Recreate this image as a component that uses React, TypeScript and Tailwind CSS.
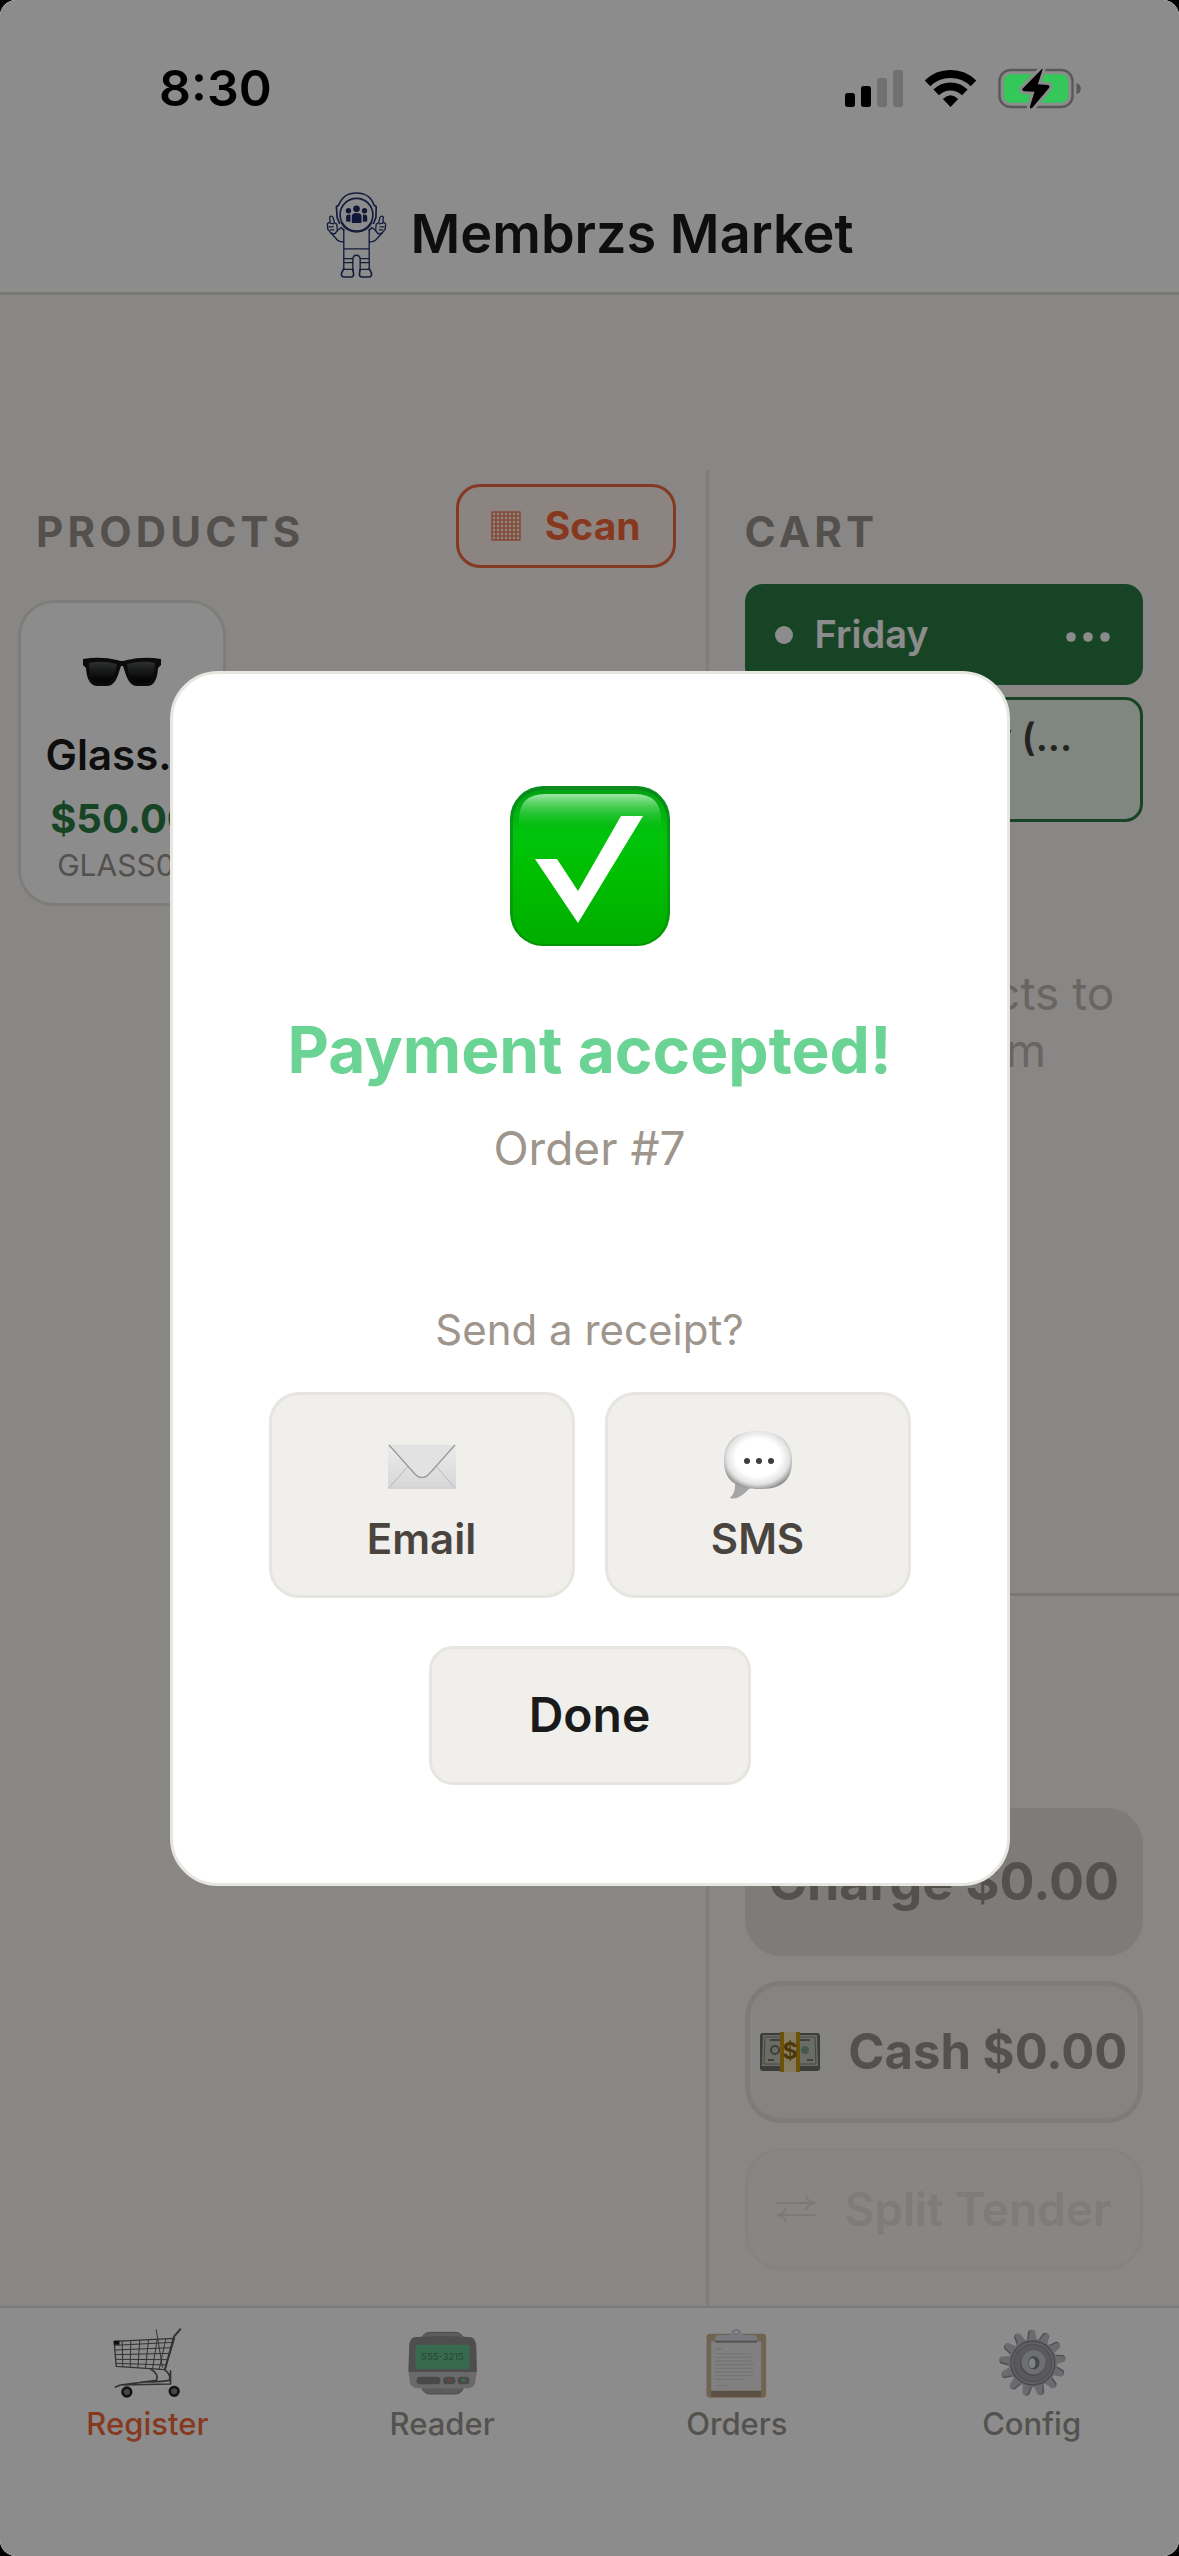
import { useState, type ReactNode } from "react";

interface Tab {
  id: string;
  label: string;
  icon: ReactNode;
}

const tabs: Tab[] = [
  { id: "register", label: "Register", icon: <CartIcon /> },
  { id: "reader", label: "Reader", icon: <PagerIcon /> },
  { id: "orders", label: "Orders", icon: <ClipboardIcon /> },
  { id: "config", label: "Config", icon: <GearIcon /> },
];

export default function App() {
  const [tab, setTab] = useState("register");
  const [open, setOpen] = useState(true);

  return (
    <div className="min-h-screen bg-black font-['Inter',sans-serif]">
      <div className="relative flex min-h-screen flex-col overflow-hidden rounded-[16px] bg-[#f9f6f2] text-[#1a1a1a]">
        <StatusBar />

        <header className="flex items-center justify-center gap-6 border-b-3 border-[#dddad5] bg-white py-3.5">
          <Astronaut />
          <h1 className="text-[54px] leading-[88px] font-semibold">
            Membrzs Market
          </h1>
        </header>

        <main className="flex flex-1 pt-[175px]">
          <section className="min-w-0 flex-3">
            <div className="flex items-end justify-between pt-[14px] pr-[30px] pl-9">
              <SectionTitle>PRODUCTS</SectionTitle>
              <button
                type="button"
                className="flex h-[84px] items-center gap-6 rounded-[24px] border-3 border-[#f06a3e] bg-[#fff0ea] px-8 text-[39px] font-bold text-[#f5693a]"
              >
                <GridIcon />
                Scan
              </button>
            </div>
            <div className="flex flex-wrap px-[18px] pt-8">
              <ProductCard name="Glass..." price="$50.00" sku="GLASS01" />
            </div>
          </section>

          <section className="flex min-w-0 flex-2 flex-col border-l-3 border-[#e8e6e1]">
            <div className="px-9 pt-[38px]">
              <SectionTitle>CART</SectionTitle>
              <button
                type="button"
                className="mt-4 flex h-[101px] w-full items-center gap-[22px] rounded-[18px] bg-[#2d7d46] pr-8 pl-[30px] text-[38px] font-semibold text-white"
              >
                <span className="size-[18px] rounded-full bg-white" />
                Friday
                <svg
                  viewBox="0 0 45 10"
                  className="mt-1 ml-auto h-[10px] w-[45px] fill-white"
                >
                  <circle cx="5" cy="5" r="4.8" />
                  <circle cx="22" cy="5" r="4.8" />
                  <circle cx="39" cy="5" r="4.8" />
                </svg>
              </button>
              <div className="mt-3 h-[125px] rounded-[18px] border-3 border-[#2d7d46] bg-[#e9f4ea] pt-3 pr-[68px] text-right text-[38px] leading-[50px] font-semibold text-[#44403c]">
                Add to Friday (...
              </div>
            </div>

            <p className="flex-1 px-9 pt-[143px] text-center text-[46px] leading-[57px] text-[#bdb9b2]">
              Tap products to
              <br />
              add them
            </p>

            <div className="flex flex-col gap-[25px] border-t-3 border-[#dedbd6] px-9 pt-[212px] pb-9">
              <button
                type="button"
                disabled
                className="h-[148px] rounded-[36px] bg-[#e5e2dc] text-[52px] font-bold whitespace-nowrap text-[#9a938d]"
              >
                Charge $0.00
              </button>
              <button
                type="button"
                disabled
                className="flex h-[142px] items-center justify-center gap-7 rounded-[36px] border-5 border-[#e5e2dd] bg-[#f2f0ee] text-[49px] font-bold whitespace-nowrap text-[#9a938d]"
              >
                <CashIcon />
                Cash $0.00
              </button>
              <button
                type="button"
                disabled
                className="flex h-[122px] items-center justify-center gap-7 rounded-[36px] border-3 border-[#f2efeb] bg-[#f7f4f1] text-[46px] font-semibold whitespace-nowrap text-[#e6e1dc]"
              >
                <SwapIcon />
                Split Tender
              </button>
            </div>
          </section>
        </main>

        <nav className="grid grid-cols-4 border-t-2 border-[#dfdfe2] bg-white pt-5 pb-[114px]">
          {tabs.map((t) => (
            <button
              key={t.id}
              type="button"
              onClick={() => setTab(t.id)}
              className={`flex flex-col items-center gap-2 text-[31px] leading-[36px] font-medium ${
                tab === t.id ? "text-[#f5693a]" : "text-[#9a958f]"
              }`}
            >
              {t.icon}
              {t.label}
            </button>
          ))}
        </nav>

        {open && (
          <div className="absolute inset-0 flex items-center justify-center bg-black/45">
            <PaymentDialog onDone={() => setOpen(false)} />
          </div>
        )}
      </div>
    </div>
  );
}

function SectionTitle({ children }: { children: ReactNode }) {
  return (
    <h2 className="pb-3 text-[42px] leading-[48px] font-bold tracking-widest text-[#9a938d]">
      {children}
    </h2>
  );
}

function ProductCard({
  name,
  price,
  sku,
}: {
  name: string;
  price: string;
  sku: string;
}) {
  return (
    <button
      type="button"
      className="flex w-[208px] flex-col items-center rounded-[36px] border-3 border-[#e6e3de] bg-white pt-[54px] pb-5"
    >
      <GlassesIcon />
      <span className="mt-11 text-[42px] leading-[48px] font-semibold">
        {name}
      </span>
      <span className="mt-4 text-[40px] leading-[48px] font-bold text-[#2d7d46]">
        {price}
      </span>
      <span className="mt-1 text-[30px] leading-[36px] text-[#9a938d]">
        {sku}
      </span>
    </button>
  );
}

function PaymentDialog({ onDone }: { onDone: () => void }) {
  return (
    <div
      role="dialog"
      aria-modal="true"
      aria-labelledby="payment-title"
      className="flex w-full max-w-[840px] flex-col items-center rounded-[48px] border-3 border-[#e8e6e1] bg-white px-24 pt-28 pb-[98px]"
    >
      <CheckIcon />
      <h2
        id="payment-title"
        className="mt-16 text-[64px] leading-[80px] font-bold text-[#6bd394]"
      >
        Payment accepted!
      </h2>
      <p className="mt-7 text-[46px] leading-[60px] text-[#9e958d]">Order #7</p>
      <p className="mt-[126px] text-[42px] leading-[52px] text-[#9e958d]">
        Send a receipt?
      </p>
      <div className="mt-9 grid w-full grid-cols-2 gap-[30px]">
        <ReceiptButton label="Email" icon={<EnvelopeIcon />} />
        <ReceiptButton label="SMS" icon={<BubbleIcon />} />
      </div>
      <button
        type="button"
        onClick={onDone}
        className="mt-12 h-[139px] w-[322px] rounded-[24px] border-3 border-[#e6e5df] bg-[#f1efeb] text-[48px] font-semibold"
      >
        Done
      </button>
    </div>
  );
}

function ReceiptButton({ label, icon }: { label: string; icon: ReactNode }) {
  return (
    <button
      type="button"
      className="flex h-[206px] flex-col items-center gap-3.5 rounded-[30px] border-3 border-[#e6e5df] bg-[#f1efeb] pt-9 text-[42px] leading-[52px] font-semibold text-[#4a443f]"
    >
      {icon}
      {label}
    </button>
  );
}

function StatusBar() {
  return (
    <div className="flex justify-between bg-white pt-14 pr-[98px] pb-14 pl-[159px]">
      <span className="z-10 text-[50px] leading-[64px] font-semibold text-black">
        8:30
      </span>
      <div className="z-10 flex items-center gap-[22px]">
        <svg viewBox="78 57 174 111" className="h-[37px] w-[58px]">
          <rect x="78" y="126" width="30" height="42" rx="8" />
          <rect x="126" y="105" width="30" height="63" rx="8" />
          <rect x="174" y="81" width="30" height="87" rx="8" fill="#707070" />
          <rect x="222" y="57" width="30" height="111" rx="8" fill="#707070" />
        </svg>
        <svg
          viewBox="318 57 152 111"
          className="h-[37px] w-[51px]"
          fill="none"
          stroke="#000"
          strokeWidth="24"
        >
          <path d="M325 97A99 99 0 0 1 463 97" />
          <path d="M351 124A61 61 0 0 1 437 124" />
          <path
            d="M394 168L371 144Q394 122 417 144Z"
            fill="#000"
            strokeWidth="0"
          />
        </svg>
        <svg viewBox="536 51 248 123" className="h-[41px] w-[83px]">
          <rect
            x="540"
            y="57"
            width="219"
            height="111"
            rx="33"
            fill="none"
            stroke="#585858"
            strokeWidth="7"
          />
          <path d="M771 96Q784 101 784 113Q784 125 771 130Z" fill="#585858" />
          <rect x="553" y="70" width="193" height="85" rx="20" fill="#34c759" />
          <path
            d="M668 53L609 113Q607 120 614 121L645 122L631 168Q631 175 638 171L689 110Q692 103 685 102L655 100L669 56Q670 52 668 53Z"
            stroke="#8c8c8c"
            strokeWidth="18"
            strokeLinejoin="round"
          />
          <path d="M668 53L609 113Q607 120 614 121L645 122L631 168Q631 175 638 171L689 110Q692 103 685 102L655 100L669 56Q670 52 668 53Z" />
        </svg>
      </div>
    </div>
  );
}

function Astronaut() {
  return (
    <svg
      viewBox="74 56 182 260"
      className="h-[87px] w-[61px]"
      fill="none"
      stroke="#26346c"
      strokeWidth="4"
      strokeLinejoin="round"
      strokeLinecap="round"
    >
      <circle cx="165" cy="127" r="49" strokeWidth="5" />
      <path
        d="M114 152L107 135L105 103L112 98C120 76 139 62 165 62C191 62 210 76 217 98L224 103L223 135L216 152"
        strokeWidth="5"
      />
      <path d="M119 151A52 52 0 0 0 211 151" />
      <g fill="#1c2a66" stroke="none">
        <circle cx="165" cy="109" r="10" />
        <circle cx="141" cy="115" r="8" />
        <circle cx="189" cy="115" r="8" />
        <path d="M151 152V132Q151 122 165 122Q180 122 180 132V152Z" />
        <path d="M134 147V133Q134 125 147 126V148Z" />
        <path d="M197 147V133Q197 125 184 126V148Z" />
      </g>
      <path d="M127 170V288M203 170V288M127 229H203" />
      <path d="M127 258H154M176 258H203M127 270H154M176 270H203M127 290H154M176 290H203" />
      <path d="M154 294V258Q156 248 165 248Q174 248 176 258V294" />
      <path
        d="M127 288L120 302Q119 313 128 313H148Q158 313 156 302L154 290M203 288L210 302Q211 313 202 313H182Q172 313 174 302L176 290"
        strokeWidth="5"
      />
      <path d="M127 208Q110 209 103 197L88 181M203 208Q220 209 227 197L242 181M108 174L119 165L127 174M222 174L211 165L203 174" />
      <path d="M88 181L79 170L78 154L86 148L85 134Q89 128 95 135L99 151L106 155L108 174L101 183Q93 185 88 181M86 152L97 154M83 163H95M87 172H97" />
      <path d="M242 181L251 170L252 154L244 148L245 134Q241 128 235 135L231 151L224 155L222 174L229 183Q237 185 242 181M244 152L233 154M247 163H235M243 172H233" />
    </svg>
  );
}

function GridIcon() {
  return (
    <svg
      viewBox="0 0 30 30"
      className="size-[30px]"
      fill="none"
      stroke="#f06a3e"
      strokeWidth="1.2"
    >
      <rect x="1" y="1" width="28" height="28" />
      <path d="M5 1V29M9 1V29M13 1V29M17 1V29M21 1V29M25 1V29M1 5H29M1 9H29M1 13H29M1 17H29M1 21H29M1 25H29" />
    </svg>
  );
}

function GlassesIcon() {
  return (
    <svg viewBox="0 0 78 30" className="h-[30px] w-[78px]">
      <defs>
        <linearGradient id="lens" x1="0" y1="0" x2="0" y2="1">
          <stop offset="0" stopColor="#55595a" />
          <stop offset="0.8" stopColor="#0c0c0c" />
        </linearGradient>
      </defs>
      <path
        d="M0 2Q18 -1 34 3Q39 5 44 3Q60 -1 78 2V8L75 11Q74 29 64 29H54Q46 29 42 15L40 9H38L36 15Q32 29 24 29H15Q4 29 3 11L0 8Z"
        fill="#151515"
      />
      <path d="M6 6Q18 3 34 7Q31 26 23 26H15Q7 26 6 6Z" fill="url(#lens)" />
      <path d="M44 7Q60 3 72 6Q71 26 63 26H54Q47 26 44 7Z" fill="url(#lens)" />
    </svg>
  );
}

function CheckIcon() {
  return (
    <svg viewBox="0 0 160 160" className="size-[160px]">
      <defs>
        <linearGradient id="tile" x1="0" y1="0" x2="0" y2="1">
          <stop offset="0" stopColor="#03a312" />
          <stop offset="0.3" stopColor="#00c40c" />
          <stop offset="0.55" stopColor="#00be00" />
          <stop offset="1" stopColor="#00ad00" />
        </linearGradient>
        <linearGradient id="edge" x1="0" y1="0" x2="0" y2="1">
          <stop offset="0" stopColor="#078a1c" />
          <stop offset="0.5" stopColor="#06a30e" />
          <stop offset="1" stopColor="#049406" />
        </linearGradient>
        <linearGradient id="gloss" x1="0" y1="0" x2="0" y2="1">
          <stop offset="0" stopColor="#9ee8a6" />
          <stop offset="1" stopColor="#02c40e" stopOpacity="0" />
        </linearGradient>
      </defs>
      <rect width="160" height="160" rx="33" fill="url(#edge)" />
      <rect x="3" y="4" width="154" height="154" rx="30" fill="url(#tile)" />
      <path
        d="M9 46V34Q9 8 35 8H125Q151 8 151 34V46Z"
        fill="url(#gloss)"
      />
      <path d="M25 73H47L68 105L111 30H133L68 137Z" fill="#fff" />
    </svg>
  );
}

function EnvelopeIcon() {
  return (
    <svg viewBox="0 0 68 68" className="size-[68px]">
      <defs>
        <linearGradient id="paper" x1="0" y1="0" x2="0" y2="1">
          <stop offset="0" stopColor="#ececec" />
          <stop offset="1" stopColor="#d6d6d8" />
        </linearGradient>
      </defs>
      <rect y="13" width="68" height="45" rx="1" fill="url(#paper)" />
      <path
        d="M1 57L20 35M67 57L48 35"
        fill="none"
        stroke="#b9b9bb"
        strokeWidth="1"
      />
      <path
        d="M1 14L26 42Q34 51 42 42L67 14"
        fill="#e2e2e3"
        stroke="#98989c"
        strokeWidth="1.2"
      />
      <path d="M0 57H68" stroke="#cfcfcf" />
    </svg>
  );
}

function BubbleIcon() {
  return (
    <svg viewBox="0 0 68 68" className="size-[68px]">
      <defs>
        <radialGradient id="bubble" cx="0.5" cy="0.46" r="0.55">
          <stop offset="0.6" stopColor="#fff" />
          <stop offset="0.84" stopColor="#e2e2e2" />
          <stop offset="1" stopColor="#969696" />
        </radialGradient>
      </defs>
      <path d="M11 50Q12 62 6 67Q14 70 26 57Z" fill="#a5a5a5" />
      <path
        d="M34 0C56 0 68 11 68 30C68 49 58 58 37 58C12 58 0 50 0 30C0 10 12 0 34 0Z"
        fill="url(#bubble)"
      />
      <g fill="#3e3e3e">
        <circle cx="23" cy="30" r="3" />
        <circle cx="35" cy="30" r="3" />
        <circle cx="47" cy="30" r="3" />
      </g>
    </svg>
  );
}

function CashIcon() {
  return (
    <svg viewBox="0 0 60 40" className="h-[40px] w-[60px] shrink-0">
      <rect y="1" width="60" height="38" rx="3" fill="#6d6f66" />
      <path d="M3 3H57L58 34H2Z" fill="#c3c5b8" />
      <path d="M5 5H55L56 32H4Z" fill="none" stroke="#80827a" strokeWidth="1" />
      <circle cx="15" cy="18" r="4" fill="none" stroke="#707268" strokeWidth="2" />
      <circle cx="45" cy="18" r="4" fill="#7da38e" />
      <path d="M10 8H20M40 8H50M8 28H14M47 28H53" stroke="#75776c" strokeWidth="2" />
      <rect x="20" width="20" height="40" fill="#c59512" />
      <rect x="24" width="12" height="40" fill="#efe2b4" />
      <text
        x="30"
        y="27"
        textAnchor="middle"
        fontSize="23"
        fontWeight="700"
        fill="#8a6410"
      >
        $
      </text>
    </svg>
  );
}

function SwapIcon() {
  return (
    <svg
      viewBox="0 0 40 28"
      className="h-[28px] w-[40px] shrink-0"
      fill="none"
      stroke="#e2ddd8"
      strokeWidth="2"
    >
      <path d="M0 8H38M30 1Q32 7 39 8Q32 9 30 15M40 20H2M10 13Q8 19 1 20Q8 21 10 27" />
    </svg>
  );
}

function CartIcon() {
  return (
    <svg
      viewBox="158 86 206 210"
      className="h-[70px] w-[69px]"
      fill="none"
      stroke="#5c5c5e"
      strokeWidth="4"
      strokeLinejoin="round"
    >
      <path d="M161 126L342 117L313 211L167 201Z" />
      <path
        d="M162 138L338 129M163 152L333 145M164 166L329 162M165 180L324 181M166 192L319 197M185 125L187 202M211 124L209 204M238 122L232 206M264 121L255 207M290 120L276 209M316 119L296 210"
        strokeWidth="3"
      />
      <path d="M287 90L306 205" strokeWidth="3" />
      <path d="M361 88L341 111L313 211" strokeWidth="6" />
      <path
        d="M270 209Q296 224 288 243L180 257L163 264M312 211Q334 228 326 243Q300 248 240 248M180 257L330 254V213"
        strokeWidth="5"
      />
      <path d="M160 130H177" stroke="#1e2024" strokeWidth="12" />
      <g fill="#8a8080" stroke="#262424" strokeWidth="8">
        <circle cx="199" cy="278" r="13" />
        <circle cx="341" cy="276" r="13" />
      </g>
    </svg>
  );
}

function PagerIcon() {
  return (
    <svg viewBox="1043 86 206 210" className="h-[70px] w-[69px]">
      <path
        d="M1083 120Q1088 99 1110 99H1183Q1204 99 1210 120ZM1083 262Q1088 284 1110 284H1183Q1204 284 1210 262Z"
        fill="#a8a8a8"
        stroke="#8a8a8a"
        strokeWidth="3"
      />
      <path
        d="M1062 114Q1146 106 1231 114Q1245 118 1247 140L1249 215L1244 250Q1240 266 1220 267H1073Q1053 266 1048 250L1044 215L1046 140Q1048 118 1062 114Z"
        fill="#c2c2c2"
      />
      <path
        d="M1062 114Q1146 106 1231 114Q1245 118 1247 140L1249 218H1044L1046 140Q1048 118 1062 114Z"
        fill="#8f8f90"
      />
      <rect x="1065" y="136" width="162" height="73" rx="10" fill="#67c48c" />
      <text
        x="1146"
        y="181"
        textAnchor="middle"
        fontSize="28"
        fill="#4a8665"
      >
        555-3215
      </text>
      <rect x="1068" y="232" width="72" height="23" rx="11" fill="#858585" />
      <rect x="1148" y="232" width="37" height="23" rx="11" fill="#858585" />
      <rect x="1191" y="232" width="36" height="23" rx="11" fill="#858585" />
      <circle cx="1167" cy="243" r="6" fill="#c4757a" />
      <circle cx="1209" cy="243" r="6" fill="#76c489" />
    </svg>
  );
}

function ClipboardIcon() {
  return (
    <svg viewBox="189 86 206 210" className="h-[70px] w-[69px]">
      <rect x="202" y="103" width="179" height="192" rx="11" fill="#cdb494" />
      <rect x="216" y="274" width="150" height="18" fill="#a5937b" />
      <rect x="216" y="126" width="150" height="148" fill="#e9e9ea" />
      <path
        d="M228 149H250M228 163H336M228 174H342M228 185H338M228 196H345M228 207H340M228 218H343M228 229H338M228 240H312M228 259H264"
        stroke="#d6d6d9"
        strokeWidth="4"
      />
      <path
        d="M228 127V118Q229 107 245 107H272Q276 88 291 88Q306 88 311 107H338Q353 107 354 118V127Z"
        fill="#dddfe3"
      />
      <circle cx="291" cy="99" r="7" fill="#fff" stroke="#b9bfca" strokeWidth="3" />
      <path d="M228 127H354" stroke="#a19a9c" strokeWidth="7" />
    </svg>
  );
}

function GearIcon() {
  const teeth = Array.from({ length: 13 }, (_, i) => (i * 360) / 13);
  return (
    <svg viewBox="1070 86 206 210" className="h-[70px] w-[69px]">
      {teeth.map((a) => (
        <g key={a} transform={`rotate(${a} 1176 191)`}>
          <path d="M1159 124L1163 96Q1174 86 1181 96L1186 124Z" fill="#8f9096" />
          <path d="M1163 124L1168 96Q1177 88 1184 96L1189 124Z" fill="#c3c4cb" />
        </g>
      ))}
      <circle cx="1177" cy="191" r="73" fill="#c3c4cb" />
      <circle cx="1177" cy="191" r="66" fill="#b1b1b7" stroke="#85868c" strokeWidth="4" />
      <circle cx="1177" cy="191" r="56" fill="#a4a5aa" stroke="#929399" strokeWidth="4" />
      <circle cx="1177" cy="192" r="38" fill="#8c8d92" />
      <circle cx="1179" cy="189" r="36" fill="#c9cad0" />
      <ellipse cx="1180" cy="190" rx="17" ry="20" fill="#7f8289" />
      <ellipse cx="1175" cy="192" rx="10" ry="15" fill="#eceef2" />
    </svg>
  );
}
